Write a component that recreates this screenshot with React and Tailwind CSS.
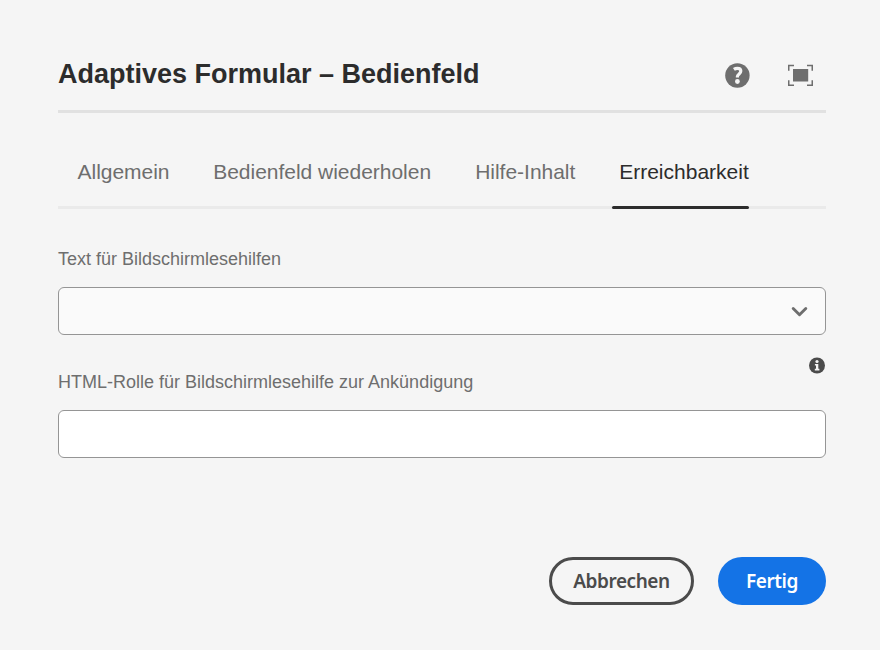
import React from "react";

const tabs = [
  { label: "Allgemein", width: "w-[135.7px]" },
  { label: "Bedienfeld wiederholen", width: "w-[262px]" },
  { label: "Hilfe-Inhalt", width: "w-[144px]" },
];

function HelpIcon() {
  return (
    <svg width="25" height="25" viewBox="0 0 25 25" aria-hidden="true">
      <circle cx="12.4" cy="12.5" r="12.2" fill="#6e6e6e" />
      <path d="M8.9 6.4c1-.7 2.100-1.100 3.500-1.100 2.200 0 3.400 1.100 3.400 2.800 0 1.200-.6 1.900-1.500 2.700-1.100.9-1.900 1.500-1.900 2.600v1.200" fill="none" stroke="#f5f5f5" strokeWidth="3.200" />
      <circle cx="12.400" cy="18.500" r="2.400" fill="#f5f5f5" />
    </svg>
  );
}

function FullscreenIcon() {
  return (
    <svg width="25" height="25" viewBox="0 -1.7 25 25" aria-hidden="true">
      <path d="M.75 6V.75H6M19 .75h5.25V6M24.25 15.500v5.100H19M6 20.600H.75V15.500" fill="none" stroke="#6e6e6e" strokeWidth="1.500" />
      <rect x="5" y="4.300" width="15.200" height="12.500" fill="#6e6e6e" />
    </svg>
  );
}

function InfoIcon() {
  return (
    <svg width="16" height="17" viewBox="0 0 16 17" aria-hidden="true">
      <circle cx="8" cy="8.500" r="8" fill="#4b4b4b" />
      <circle cx="8" cy="4.500" r="1.600" fill="#f5f5f5" />
      <path d="M5.900 6.900h3.400v4.900h1.100v1.600H5.800v-1.600H7V8.500H5.900z" fill="#f5f5f5" />
    </svg>
  );
}

export default function App() {
  return (
    <main className="h-[650px] w-[880px] bg-[#f5f5f5] pt-10 pr-[54px] pl-[58px] font-['Liberation_Sans',Arial,sans-serif]">
      <header className="flex h-[73px] items-start justify-between border-b-3 border-[#e1e1e1] pr-[13px]">
        <h1 className="pt-[18px] text-[27px] leading-8 font-bold whitespace-nowrap text-[#2c2c2c]">Adaptives Formular – Bedienfeld</h1>
        <div className="flex items-center gap-[38px] pt-[23px]">
          <HelpIcon />
          <FullscreenIcon />
        </div>
      </header>

      <nav className="flex h-24 border-b-3 border-[#eaeaea] pl-[19.500px] text-[21px] leading-6 tracking-[-0.020px] whitespace-nowrap text-[#6e6e6e]">
        {tabs.map((tab) => (
          <div key={tab.label} className={`${tab.width} shrink-0 pt-[47px]`}>{tab.label}</div>
        ))}
        <div className="-ml-[7.600px] h-24 w-[137px] shrink-0">
          <div className="h-[93px] pt-[47px] pl-[7.600px] tracking-normal text-[#2c2c2c]">Erreichbarkeit</div>
          <div className="h-[3px] rounded-full bg-[#2c2c2c]" />
        </div>
      </nav>

      <section className="pt-[38px]">
        <label className="block h-10 text-[18px] leading-6 text-[#6e6e6e]">Text für Bildschirmlesehilfen</label>
        <div className="flex h-12 items-center justify-end rounded-md border border-[#959595] bg-[#fafafa] pr-[17px]">
          <svg width="17" height="11" viewBox="0 0 17 11" aria-hidden="true">
            <path d="M2.200 2.500l6.300 6.200 6.300-6.200" fill="none" stroke="#6e6e6e" strokeWidth="2.900" strokeLinecap="round" strokeLinejoin="round" />
          </svg>
        </div>
      </section>

      <section>
        <div className="flex h-[75px] justify-between">
          <label className="pt-[35px] text-[18px] leading-6 text-[#6e6e6e]">HTML-Rolle für Bildschirmlesehilfe zur Ankündigung</label>
          <div className="pt-[22px] pr-px"><InfoIcon /></div>
        </div>
        <div className="h-12 rounded-md border border-[#959595] bg-white" />
      </section>

      <footer className="mt-[99px] flex justify-end gap-6 font-['Noto_Sans',sans-serif] text-[19px] font-semibold">
        <button className="h-12 w-[145px] rounded-full border-3 border-[#4b4b4b] text-[#4b4b4b]"><span className="tracking-[-0.450px]">Abbrechen</span></button>
        <button className="h-12 w-[108px] rounded-full bg-[#1473e6] text-white"><span className="tracking-[-0.400px]">Fertig</span></button>
      </footer>
    </main>
  );
}
